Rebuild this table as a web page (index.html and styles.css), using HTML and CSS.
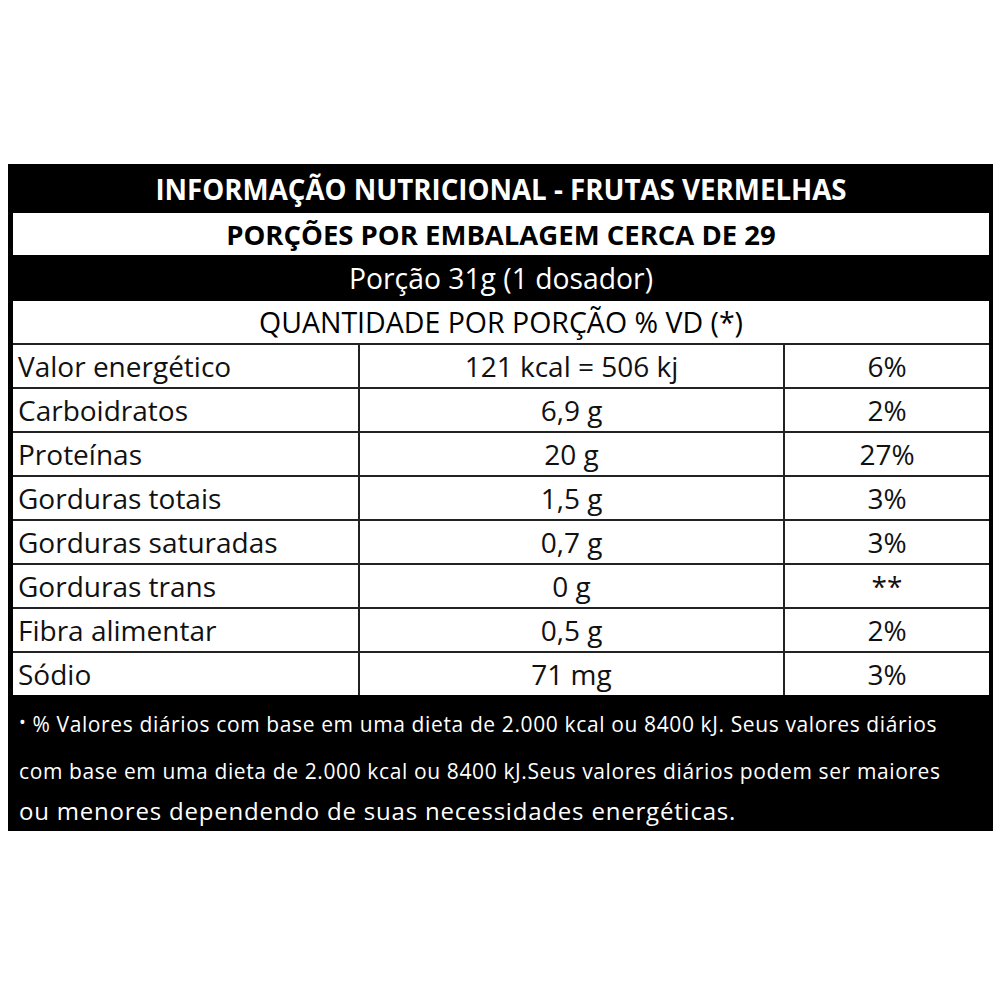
FILE: index.html
```html
<!DOCTYPE html>
<html lang="pt">
<head>
<meta charset="utf-8">
<link rel="stylesheet" href="styles.css">
</head>
<body>
<div class="label">
  <div class="row title">INFORMAÇÃO NUTRICIONAL - FRUTAS VERMELHAS</div>
  <div class="row portions">PORÇÕES POR EMBALAGEM CERCA DE 29</div>
  <div class="row serving">Porção 31g (1 dosador)</div>
  <div class="row qty">QUANTIDADE POR PORÇÃO % VD (*)</div>
  <div class="grid">
    <div class="c n">Valor energético</div><div class="c v">121 kcal = 506 kj</div><div class="c p">6%</div>
    <div class="c n">Carboidratos</div><div class="c v">6,9 g</div><div class="c p">2%</div>
    <div class="c n">Proteínas</div><div class="c v">20 g</div><div class="c p">27%</div>
    <div class="c n">Gorduras totais</div><div class="c v">1,5 g</div><div class="c p">3%</div>
    <div class="c n">Gorduras saturadas</div><div class="c v">0,7 g</div><div class="c p">3%</div>
    <div class="c n">Gorduras trans</div><div class="c v">0 g</div><div class="c p">**</div>
    <div class="c n">Fibra alimentar</div><div class="c v">0,5 g</div><div class="c p">2%</div>
    <div class="c n">Sódio</div><div class="c v">71 mg</div><div class="c p">3%</div>
  </div>
  <div class="foot">
    <p class="f1"><span class="dot">•</span> % Valores diários com base em uma dieta de 2.000 kcal ou 8400 kJ. Seus valores diários</p>
    <p class="f2">com base em uma dieta de 2.000 kcal ou 8400 kJ.Seus valores diários podem ser maiores</p>
    <p class="f3">ou menores dependendo de suas necessidades energéticas.</p>
  </div>
</div>
</body>
</html>
```
FILE: styles.css
```css
html, body { margin: 0; background: #fff; }
body { padding: 164px 7px 0 8px; font-family: "Open Sans", "Lato", sans-serif; }
.label {
  width: 985px;
  background: #000;
  padding: 0 4px 0 5px;
  box-sizing: border-box;
}
.row {
  display: flex; align-items: center; justify-content: center;
}
.title { height: 49px; color: #fff; font-weight: 700; font-size: 27.7px; }
.portions { height: 42px; background: #fff; color: #000; font-weight: 700; font-size: 27.5px; }
.serving { height: 46px; color: #fff; font-size: 28.3px; }
.qty { height: 42px; background: #fff; color: #000; border-bottom: 2px solid #222; font-size: 28.5px; }
.grid {
  display: grid;
  grid-template-columns: 345px 423px 204px;
  background: #222;
  gap: 2px;
}
.c {
  background: #fff; height: 42px;
  display: flex; align-items: center;
  font-size: 28px; color: #111;
}
.n { padding-left: 5px; }
.v, .p { justify-content: center; }
.foot { color: #fff; padding: 15px 0 0 6px; height: 136px; box-sizing: border-box; }
.foot p { margin: 0; white-space: nowrap; }
.f1, .f2 { font-size: 21px; line-height: 24px; font-weight: 500; letter-spacing: 0.62px; }
.f1 { margin-bottom: 23px !important; }
.f2 { margin-bottom: 14px !important; }
.f3 { font-size: 24px; line-height: 28px; font-weight: 500; letter-spacing: 0.8px; }
.dot { font-size: 18px; vertical-align: 3px; }
```
